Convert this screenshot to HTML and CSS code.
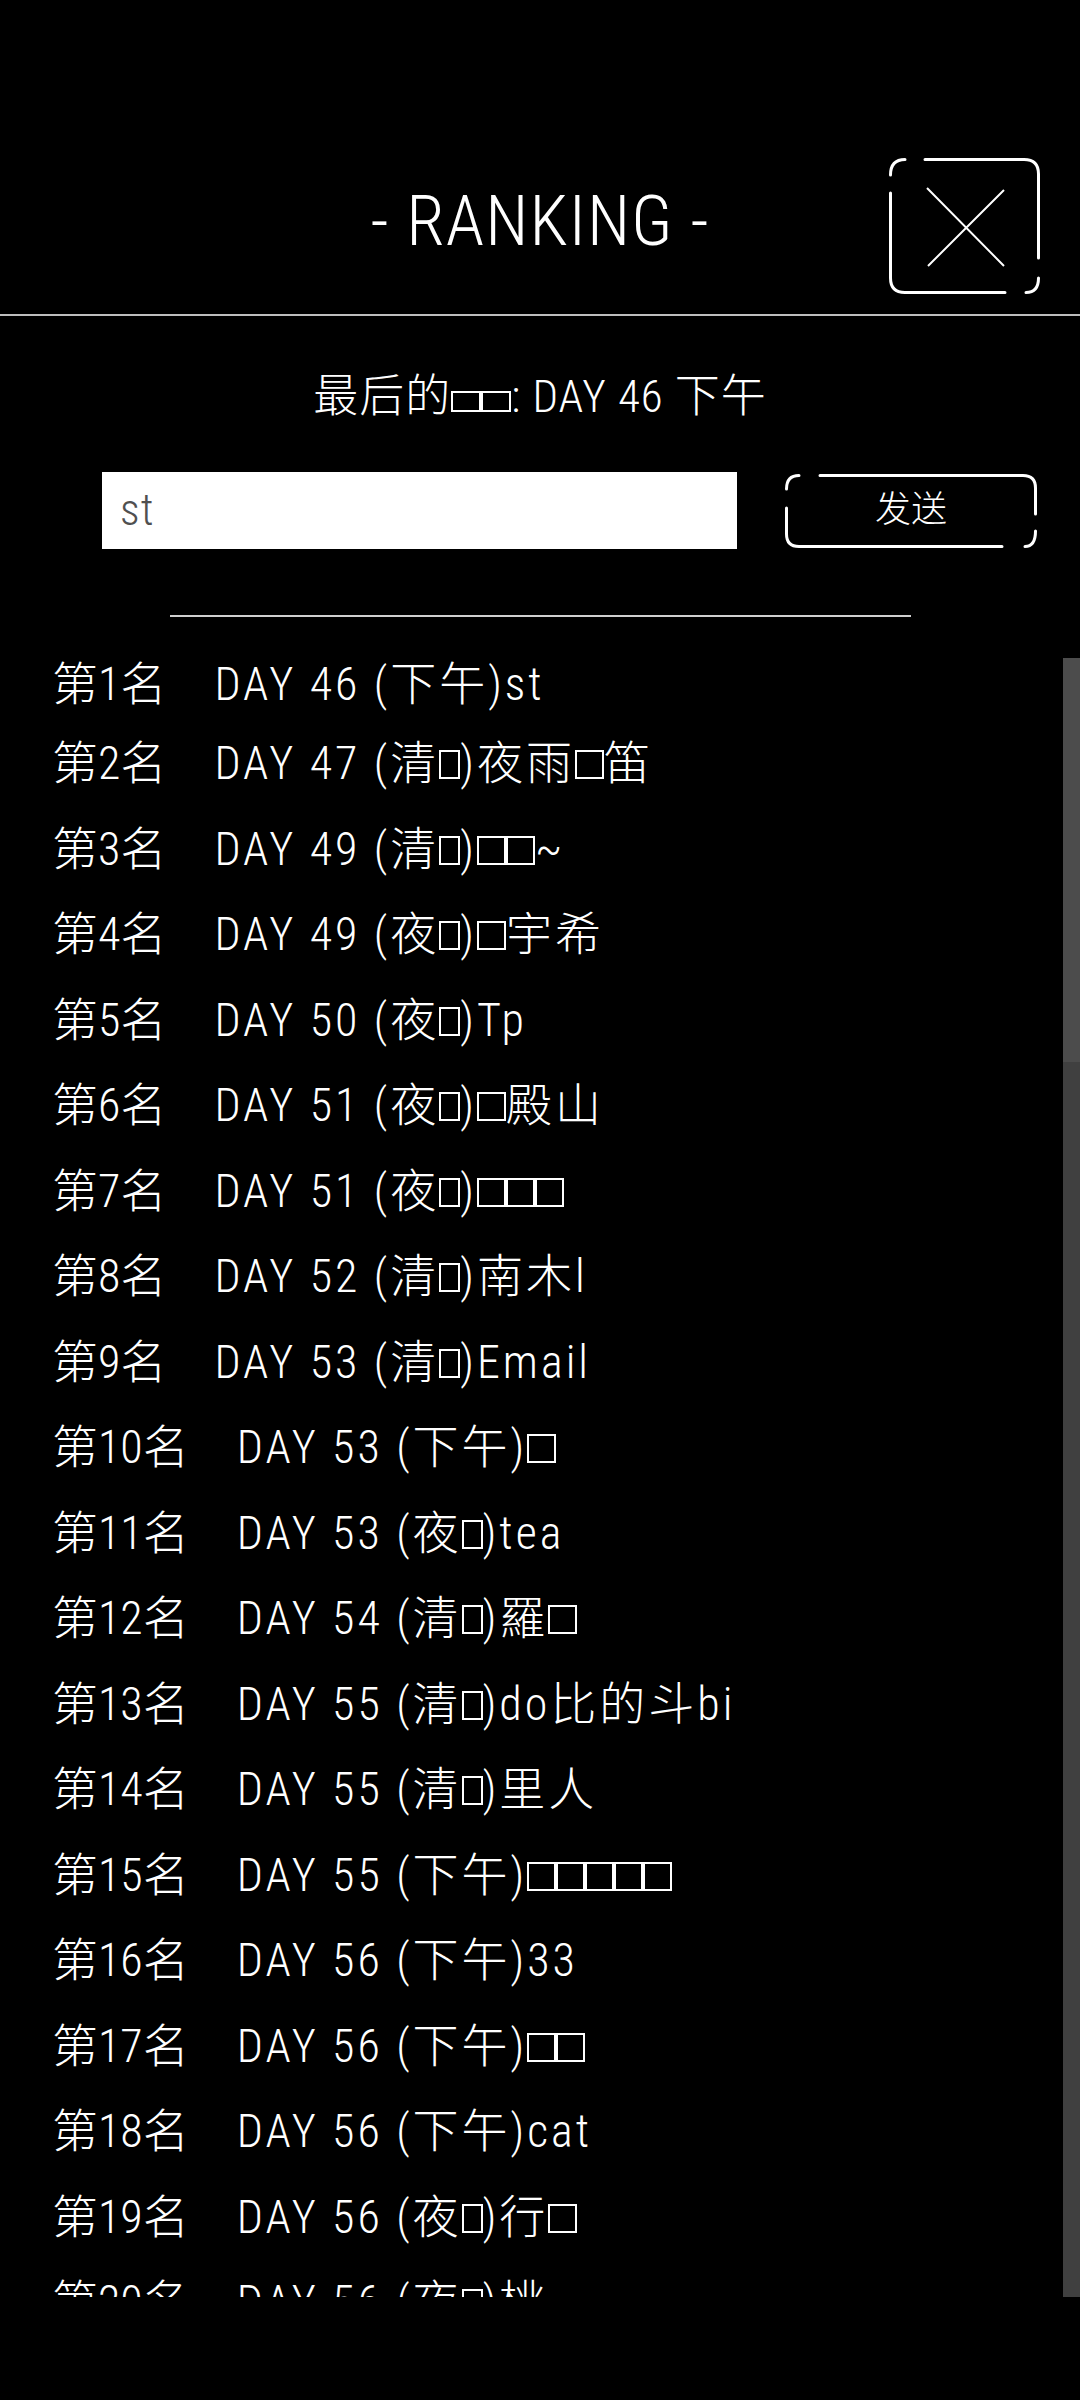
FILE: index.html
```html
<!DOCTYPE html>
<html lang="zh">
<head>
<meta charset="utf-8">
<title>Ranking</title>
<link rel="stylesheet" href="styles.css">
</head>
<body>
<div class="screen">
  <header class="header">
    <div class="spacer"></div>
    <h1 class="title">- RANKING -</h1>
    <button class="close" aria-label="close">
      <svg width="151" height="136" viewBox="0 0 151 136" fill="none" stroke="#fff">
        <path d="M1.5 17 Q1.5 1.5 16 1.5" stroke-width="3" stroke-linecap="round"/>
        <path d="M36 1.5 H135 Q149.5 1.5 149.5 16 V100" stroke-width="3" stroke-linecap="round"/>
        <path d="M149.5 120 Q149.5 134.5 137 134.5" stroke-width="3" stroke-linecap="round"/>
        <path d="M116 134.5 H16 Q1.5 134.5 1.5 120 V35" stroke-width="3" stroke-linecap="round"/>
        <path d="M38 30 L115 108 M115 32 L39 108" stroke-width="2"/>
      </svg>
    </button>
  </header>

  <p class="last">最后的<span class="tofu tofu-s"></span><span class="tofu tofu-s"></span>: DAY 46 下午</p>

  <div class="form">
    <div class="input">st</div>
    <button class="send">
      <svg class="send-frame" width="252" height="74" viewBox="0 0 252 74" fill="none" stroke="#fff" stroke-width="3" stroke-linecap="round">
        <path d="M1.5 15 Q1.5 1.5 14 1.5"/>
        <path d="M35 1.5 H238 Q250.5 1.5 250.5 14 V40"/>
        <path d="M250.5 57 Q250.5 72.5 240 72.5"/>
        <path d="M217 72.5 H14 Q1.5 72.5 1.5 60 V34"/>
      </svg>
      <span class="send-label">发送</span>
    </button>
  </div>

  <div class="divider"></div>

  <div class="board">
    <div class="list">
      <div class="rows">
        <div class="row"><span class="rank">第1名</span><span class="info">DAY 46 (下午)st</span></div>
        <div class="row"><span class="rank">第2名</span><span class="info">DAY 47 (清<span class="tofu tofu-n"></span>)夜雨<span class="tofu"></span>笛</span></div>
        <div class="row"><span class="rank">第3名</span><span class="info">DAY 49 (清<span class="tofu tofu-n"></span>)<span class="tofu"></span><span class="tofu"></span>~</span></div>
        <div class="row"><span class="rank">第4名</span><span class="info">DAY 49 (夜<span class="tofu tofu-n"></span>)<span class="tofu"></span>宇希</span></div>
        <div class="row"><span class="rank">第5名</span><span class="info">DAY 50 (夜<span class="tofu tofu-n"></span>)Tp</span></div>
        <div class="row"><span class="rank">第6名</span><span class="info">DAY 51 (夜<span class="tofu tofu-n"></span>)<span class="tofu"></span>殿山</span></div>
        <div class="row"><span class="rank">第7名</span><span class="info">DAY 51 (夜<span class="tofu tofu-n"></span>)<span class="tofu"></span><span class="tofu"></span><span class="tofu"></span></span></div>
        <div class="row"><span class="rank">第8名</span><span class="info">DAY 52 (清<span class="tofu tofu-n"></span>)南木l</span></div>
        <div class="row"><span class="rank">第9名</span><span class="info">DAY 53 (清<span class="tofu tofu-n"></span>)Email</span></div>
        <div class="row"><span class="rank">第10名</span><span class="info">DAY 53 (下午)<span class="tofu"></span></span></div>
        <div class="row"><span class="rank">第11名</span><span class="info">DAY 53 (夜<span class="tofu tofu-n"></span>)tea</span></div>
        <div class="row"><span class="rank">第12名</span><span class="info">DAY 54 (清<span class="tofu tofu-n"></span>)羅<span class="tofu"></span></span></div>
        <div class="row"><span class="rank">第13名</span><span class="info">DAY 55 (清<span class="tofu tofu-n"></span>)do比的斗bi</span></div>
        <div class="row"><span class="rank">第14名</span><span class="info">DAY 55 (清<span class="tofu tofu-n"></span>)里人</span></div>
        <div class="row"><span class="rank">第15名</span><span class="info">DAY 55 (下午)<span class="tofu"></span><span class="tofu"></span><span class="tofu"></span><span class="tofu"></span><span class="tofu"></span></span></div>
        <div class="row"><span class="rank">第16名</span><span class="info">DAY 56 (下午)33</span></div>
        <div class="row"><span class="rank">第17名</span><span class="info">DAY 56 (下午)<span class="tofu"></span><span class="tofu"></span></span></div>
        <div class="row"><span class="rank">第18名</span><span class="info">DAY 56 (下午)cat</span></div>
        <div class="row"><span class="rank">第19名</span><span class="info">DAY 56 (夜<span class="tofu tofu-n"></span>)行<span class="tofu"></span></span></div>
        <div class="row"><span class="rank">第20名</span><span class="info">DAY 56 (夜<span class="tofu tofu-n"></span>)桃</span></div>
        <div class="row"><span class="rank">第21名</span><span class="info">DAY 57 (清<span class="tofu tofu-n"></span>)</span></div>
      </div>
    </div>
    <div class="scrollbar"><div class="thumb"></div></div>
  </div>
</div>
</body>
</html>
```
FILE: styles.css
```css
* { box-sizing: border-box; }

html, body {
  margin: 0;
  padding: 0;
  background: #000;
}

body {
  width: 1080px;
  height: 2400px;
  overflow: hidden;
  color: #fff;
  font-family: "Roboto Condensed", "Open Sans", "Noto Sans CJK SC", sans-serif;
  font-stretch: 75%;
  font-weight: 300;
}

.screen {
  display: flex;
  flex-direction: column;
  height: 2400px;
}

.header {
  display: grid;
  grid-template-columns: 1fr auto 1fr;
  align-items: start;
  height: 316px;
  padding-top: 158px;
  border-bottom: 2px solid #bdbdbd;
}

.title {
  margin: 3px 0 0;
  font-size: 70px;
  line-height: 120px;
  font-weight: 300;
  letter-spacing: 1px;
  white-space: nowrap;
}

.close {
  justify-self: end;
  margin-right: 40px;
  width: 151px;
  height: 136px;
  padding: 0;
  border: 0;
  background: transparent;
  display: block;
}
.close svg { display: block; }

.last {
  margin: 51px 0 0;
  text-align: center;
  font-size: 45px;
  line-height: 60px;
  letter-spacing: 1px;
}

.tofu {
  display: inline-block;
  width: 0.63em;
  height: 0.62em;
  border: 2px solid #fff;
  vertical-align: baseline;
}
.tofu-n { width: 0.46em; }
.tofu-s {
  width: 30px;
  height: 21px;
}

.form {
  display: flex;
  align-items: center;
  gap: 48px;
  margin-top: 45px;
  padding-left: 102px;
}

.input {
  width: 635px;
  height: 77px;
  background: #fff;
  color: #505050;
  font-size: 44px;
  line-height: 77px;
  padding-left: 18px;
  letter-spacing: 1px;
}

.send {
  position: relative;
  width: 252px;
  height: 74px;
  padding: 0;
  border: 0;
  background: transparent;
  color: #fff;
  font-family: inherit;
  font-weight: 300;
  font-size: 36px;
  display: flex;
  align-items: center;
  justify-content: center;
}
.send-frame {
  position: absolute;
  inset: 0;
}
.send-label { position: relative; top: -5px; }

.divider {
  width: 741px;
  height: 2px;
  margin: 66px auto 0;
  background: #cfcfcf;
}

.board {
  display: flex;
  margin-top: 41px;
  height: 1639px;
}

.list {
  flex: 1;
  overflow: hidden;
  padding-left: 52px;
}

.rows { margin-top: -20px; }

.row {
  height: 85.5px;
  font-size: 46px;
  line-height: 86px;
  white-space: nowrap;
}
.row:first-child {
  height: 82px;
  line-height: 92px;
}

.rank { margin-right: 48px; }
.info { letter-spacing: 3px; }

.scrollbar {
  width: 17px;
  background: #404040;
}
.thumb {
  height: 404px;
  background: #4c4c4c;
}
```
